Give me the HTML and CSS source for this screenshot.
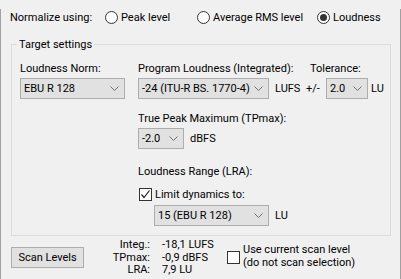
FILE: index.html
```html
<!DOCTYPE html>
<html>
<head>
<meta charset="utf-8">
<link rel="stylesheet" href="styles.css">
</head>
<body>
<div class="dialog">
  <div class="normalize">
    <span class="nlabel">Normalize using:</span>
    <span class="radio r1"><span class="rb"></span>Peak level</span>
    <span class="radio r2"><span class="rb"></span>Average RMS level</span>
    <span class="radio"><span class="rb on"></span>Loudness</span>
  </div>

  <div class="group">
    <span class="legend">Target settings</span>

    <div class="col c1">
      <div class="lbl">Loudness Norm:</div>
      <div class="combo w-norm"><span>EBU R 128</span><svg class="chev" width="9" height="5" viewBox="0 0 9 5"><polyline points="0.5,0.5 4.5,4.5 8.5,0.5" fill="none" stroke="#707070" stroke-width="1"/></svg></div>
    </div>

    <div class="col c2">
      <div class="lbl">Program Loudness (Integrated):</div>
      <div class="row">
        <div class="combo w-prog"><span>-24 (ITU-R BS. 1770-4)</span><svg class="chev" width="9" height="5" viewBox="0 0 9 5"><polyline points="0.5,0.5 4.5,4.5 8.5,0.5" fill="none" stroke="#707070" stroke-width="1"/></svg></div>
        <span class="unit">LUFS</span>
      </div>

      <div class="lbl tp">True Peak Maximum (TPmax):</div>
      <div class="row">
        <div class="combo w-tp"><span>-2.0</span><svg class="chev" width="9" height="5" viewBox="0 0 9 5"><polyline points="0.5,0.5 4.5,4.5 8.5,0.5" fill="none" stroke="#707070" stroke-width="1"/></svg></div>
        <span class="unit">dBFS</span>
      </div>

      <div class="lbl lra">Loudness Range (LRA):</div>
      <div class="check limit">
        <span class="cb"><svg width="11" height="11" viewBox="0 0 11 11"><polyline points="1.5,5.5 4,8.5 9.5,1.5" fill="none" stroke="#222" stroke-width="1.2"/></svg></span>
        <span>Limit dynamics to:</span>
      </div>
      <div class="row indent">
        <div class="combo w-lra"><span>15 (EBU R 128)</span><svg class="chev" width="9" height="5" viewBox="0 0 9 5"><polyline points="0.5,0.5 4.5,4.5 8.5,0.5" fill="none" stroke="#707070" stroke-width="1"/></svg></div>
        <span class="unit">LU</span>
      </div>
    </div>

    <div class="col c3">
      <div class="lbl tol">Tolerance:</div>
      <div class="row">
        <span class="pm">+/-</span>
        <div class="combo w-tol"><span>2.0</span><svg class="chev" width="9" height="5" viewBox="0 0 9 5"><polyline points="0.5,0.5 4.5,4.5 8.5,0.5" fill="none" stroke="#707070" stroke-width="1"/></svg></div>
        <span class="unit u-tol">LU</span>
      </div>
    </div>
  </div>

  <div class="bottom">
    <div class="button">Scan Levels</div>
    <div class="stats">
      <span class="sk">Integ.:</span><span class="sv">-18,1 LUFS</span>
      <span class="sk">TPmax:</span><span class="sv">-0,9 dBFS</span>
      <span class="sk">LRA:</span><span class="sv">7,9 LU</span>
    </div>
    <div class="check usescan">
      <span class="cb"></span>
      <span class="twoline">Use current scan level<br>(do not scan selection)</span>
    </div>
  </div>
</div>
</body>
</html>
```

FILE: styles.css
```css
* { box-sizing: border-box; }
html, body { margin: 0; padding: 0; }
body {
  width: 401px;
  height: 279px;
  background: #f0f0f0;
  font-family: Roboto, "Liberation Sans", sans-serif;
  font-size: 11px;
  color: #000;
  overflow: hidden;
}
.dialog {
  width: 401px;
  height: 279px;
  border: 1px solid #a0a0a0;
  border-top: none;
  background: #f0f0f0;
}
.normalize {
  display: flex;
  align-items: center;
  height: 16px;
  margin-top: 9px;
  margin-bottom: 19px;
  padding-left: 9px;
  line-height: 15px;
}
.nlabel { width: 95px; }
.radio { display: flex; align-items: center; }
.r1 { width: 92px; }
.r2 { width: 120px; }
.rb {
  width: 13px;
  height: 13px;
  border: 1px solid #333;
  border-radius: 50%;
  background: #fff;
  margin-right: 3px;
  display: flex;
  align-items: center;
  justify-content: center;
}
.rb.on::after {
  content: "";
  width: 7px;
  height: 7px;
  border-radius: 50%;
  background: #333;
}
.group {
  position: relative;
  margin-left: 10px;
  width: 380px;
  height: 192px;
  border: 1px solid #dcdcdc;
  display: flex;
  padding: 16px 0 0 8px;
}
.legend {
  position: absolute;
  top: -8px;
  left: 5px;
  padding: 0 2px;
  background: #f0f0f0;
  line-height: 15px;
}
.col { display: flex; flex-direction: column; }
.c1 { width: 118px; }
.c2 { width: 168px; }
.c3 { width: 80px; }
.lbl { line-height: 15px; height: 15px; margin-bottom: 2px; white-space: nowrap; }
.lbl.tp { margin-top: 12px; }
.lbl.lra { margin-top: 15px; }
.lbl.tol { margin-left: 4px; }
.row { display: flex; align-items: center; }
.combo {
  height: 21px;
  border: 1px solid #adadad;
  background: #e1e1e1;
  display: flex;
  align-items: center;
  justify-content: space-between;
  padding: 0 5px 0 3px;
  white-space: nowrap;
}
.chev { flex: none; }
.w-norm { width: 105px; }
.w-prog { width: 131px; }
.w-tp { width: 46px; }
.w-lra { width: 115px; }
.w-tol { width: 42px; }
.unit { margin-left: 6px; }
.u-tol { margin-left: 3px; }
.pm { width: 20px; }
.check { display: flex; align-items: center; }
.cb {
  width: 13px;
  height: 13px;
  border: 1px solid #333;
  background: #fff;
  display: flex;
  align-items: center;
  justify-content: center;
  flex: none;
}
.limit { margin-top: 7px; margin-left: 1px; height: 13px; }
.limit .cb { margin-right: 3px; }
.indent { margin-top: 4px; margin-left: 16px; }
.bottom {
  display: flex;
  align-items: flex-start;
  padding-left: 10px;
}
.button {
  width: 73px;
  height: 21px;
  margin-top: 11px;
  border: 1px solid #adadad;
  background: #e1e1e1;
  display: flex;
  align-items: center;
  justify-content: center;
}
.stats {
  display: grid;
  grid-template-columns: 66px 65px;
  column-gap: 12px;
  margin-top: 3px;
  line-height: 12.5px;
}
.sk { text-align: right; }
.sv { white-space: nowrap; }
.usescan { margin-top: 7px; }
.usescan .cb { margin-right: 3px; margin-top: 2px; }
.twoline { line-height: 13px; }
```
